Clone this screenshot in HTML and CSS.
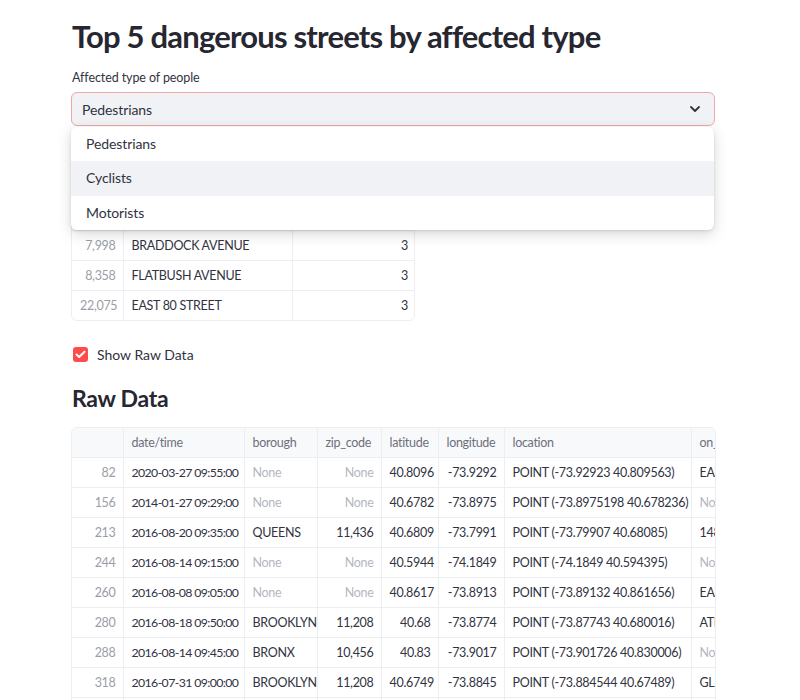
FILE: index.html
```html
<!DOCTYPE html>
<html lang="en">
<head>
<meta charset="utf-8">
<title>Top 5 dangerous streets</title>
<link rel="stylesheet" href="styles.css">
</head>
<body>
<main class="app">
  <h1 class="title">Top 5 dangerous streets by affected type</h1>

  <div class="select-block">
    <div class="select-label">Affected type of people</div>
    <div class="select-box">
      <span class="select-value">Pedestrians</span>
      <svg class="chevron" width="12" height="8" viewBox="0 0 12 8"><polyline points="2,2 6,6 10,2" fill="none" stroke="#31333f" stroke-width="1.8" stroke-linecap="round" stroke-linejoin="round"/></svg>
    </div>
    <ul class="menu">
      <li class="menu-item">Pedestrians</li>
      <li class="menu-item active">Cyclists</li>
      <li class="menu-item">Motorists</li>
    </ul>
  </div>

  <div class="frame small">
    <table class="grid">
      <colgroup><col class="c-idx"><col class="c-street"><col class="c-count"></colgroup>
      <thead><tr><th></th><th>on_street_name</th><th>injured</th></tr></thead>
      <tbody>
        <tr><td class="idx">1,242</td><td>BROADWAY</td><td class="num">4</td></tr>
        <tr><td class="idx">5,316</td><td>ATLANTIC AVENUE</td><td class="num">3</td></tr>
        <tr><td class="idx">7,998</td><td>BRADDOCK AVENUE</td><td class="num">3</td></tr>
        <tr><td class="idx">8,358</td><td>FLATBUSH AVENUE</td><td class="num">3</td></tr>
        <tr><td class="idx">22,075</td><td>EAST 80 STREET</td><td class="num">3</td></tr>
      </tbody>
    </table>
  </div>

  <label class="check">
    <span class="check-box"><svg width="11" height="9" viewBox="0 0 11 9"><polyline points="1.5,4.5 4.2,7 9.5,1.8" fill="none" stroke="#fff" stroke-width="2" stroke-linecap="round" stroke-linejoin="round"/></svg></span>
    <span class="check-text">Show Raw Data</span>
  </label>

  <h2 class="subtitle">Raw Data</h2>

  <div class="frame raw">
    <table class="grid">
      <colgroup>
        <col class="r-idx"><col class="r-date"><col class="r-bor"><col class="r-zip"><col class="r-lat"><col class="r-lon"><col class="r-loc"><col class="r-on">
      </colgroup>
      <thead><tr><th></th><th>date/time</th><th>borough</th><th>zip_code</th><th>latitude</th><th>longitude</th><th>location</th><th>on_street_name</th></tr></thead>
      <tbody>
        <tr><td class="idx">82</td><td class="date">2020-03-27 09:55:00</td><td class="none">None</td><td class="num none">None</td><td class="num">40.8096</td><td class="num">-73.9292</td><td>POINT (-73.92923 40.809563)</td><td>EAST 138 STREET</td></tr>
        <tr><td class="idx">156</td><td class="date">2014-01-27 09:29:00</td><td class="none">None</td><td class="num none">None</td><td class="num">40.6782</td><td class="num">-73.8975</td><td>POINT (-73.8975198 40.678236)</td><td class="none">None</td></tr>
        <tr><td class="idx">213</td><td class="date">2016-08-20 09:35:00</td><td>QUEENS</td><td class="num">11,436</td><td class="num">40.6809</td><td class="num">-73.7991</td><td>POINT (-73.79907 40.68085)</td><td>148 STREET</td></tr>
        <tr><td class="idx">244</td><td class="date">2016-08-14 09:15:00</td><td class="none">None</td><td class="num none">None</td><td class="num">40.5944</td><td class="num">-74.1849</td><td>POINT (-74.1849 40.594395)</td><td class="none">None</td></tr>
        <tr><td class="idx">260</td><td class="date">2016-08-08 09:05:00</td><td class="none">None</td><td class="num none">None</td><td class="num">40.8617</td><td class="num">-73.8913</td><td>POINT (-73.89132 40.861656)</td><td>EAST FORDHAM ROAD</td></tr>
        <tr><td class="idx">280</td><td class="date">2016-08-18 09:50:00</td><td>BROOKLYN</td><td class="num">11,208</td><td class="num">40.68</td><td class="num">-73.8774</td><td>POINT (-73.87743 40.680016)</td><td>ATLANTIC AVENUE</td></tr>
        <tr><td class="idx">288</td><td class="date">2016-08-14 09:45:00</td><td>BRONX</td><td class="num">10,456</td><td class="num">40.83</td><td class="num">-73.9017</td><td>POINT (-73.901726 40.830006)</td><td class="none">None</td></tr>
        <tr><td class="idx">318</td><td class="date">2016-07-31 09:00:00</td><td>BROOKLYN</td><td class="num">11,208</td><td class="num">40.6749</td><td class="num">-73.8845</td><td>POINT (-73.884544 40.67489)</td><td>GLENMORE AVENUE</td></tr>
        <tr><td class="idx">331</td><td class="date">2016-07-30 09:10:00</td><td>QUEENS</td><td class="num">11,368</td><td class="num">40.7571</td><td class="num">-73.8612</td><td>POINT (-73.86121 40.75712)</td><td>34 AVENUE</td></tr>
      </tbody>
    </table>
  </div>
</main>
</body>
</html>
```
FILE: styles.css
```css
html, body {
  margin: 0;
  padding: 0;
  background: #ffffff;
  overflow: hidden;
}
body {
  font-family: "Lato", "Open Sans", sans-serif;
  color: #31333f;
}
.app {
  width: 644px;
  padding: 16px 0 0 71px;
}
.title {
  margin: 0 0 0 1px;
  font-size: 31px;
  font-weight: 700;
  line-height: 40px;
  color: #262730;
  letter-spacing: -0.8px;
}
.select-block {
  position: relative;
  margin-top: 14px;
}
.select-label {
  font-size: 12.5px;
  line-height: 16px;
  margin-left: 1px;
  margin-bottom: 6px;
  letter-spacing: -0.1px;
}
.select-box {
  height: 32px;
  border: 1px solid #f0a7a7;
  border-radius: 6px;
  background: #f0f2f6;
  display: flex;
  align-items: center;
  justify-content: space-between;
  padding: 0 13px 0 10px;
  font-size: 14px;
  letter-spacing: -0.1px;
}
.chevron {
  display: block;
}
.menu {
  position: absolute;
  left: 0;
  right: 1px;
  top: calc(100% + 1px);
  margin: 0;
  padding: 0;
  list-style: none;
  background: #ffffff;
  border-radius: 6px;
  box-shadow: 0 4px 14px rgba(0, 0, 0, 0.16), 0 1px 3px rgba(0, 0, 0, 0.1);
  z-index: 10;
  overflow: hidden;
}
.menu-item {
  height: 34.3px;
  line-height: 34.3px;
  padding-left: 15px;
  font-size: 14px;
  letter-spacing: -0.1px;
}
.menu-item.active {
  background: #f0f2f6;
}
.frame {
  border: 1px solid #eceef2;
  border-radius: 6px;
  overflow: hidden;
}
.frame.small {
  margin-top: 14px;
  width: 342px;
}
.frame.raw {
  width: 643px;
  margin-top: 14px;
}
.grid {
  border-collapse: collapse;
  table-layout: fixed;
  font-size: 12.5px;
  letter-spacing: -0.3px;
}
.frame.small .grid { width: 343px; }
.frame.raw .grid { width: 760px; }
.c-idx { width: 51px; }
.c-street { width: 169px; }
.c-count { width: 123px; }
.r-idx { width: 51px; }
.r-date { width: 121px; }
.r-bor { width: 73px; }
.r-zip { width: 64px; }
.r-lat { width: 57px; }
.r-lon { width: 66px; }
.r-loc { width: 187px; }
.r-on { width: 141px; }
.grid th,
.grid td {
  height: 29px;
  padding: 0 2px 0 8px;
  border-right: 1px solid #eceef2;
  border-bottom: 1px solid #eceef2;
  white-space: nowrap;
  overflow: hidden;
  text-align: left;
}
.grid th {
  background: #f8f9fb;
  font-weight: 400;
  color: #6c707c;
}
.grid tr:last-child td { border-bottom: none; }
.frame.small .grid th:last-child,
.frame.small .grid td:last-child { border-right: none; }
.grid td.idx {
  text-align: right;
  color: #9a9ea8;
  padding-right: 7px;
}
.grid td.date {
  font-size: 12.3px;
  letter-spacing: -0.6px;
}
.grid td.num {
  text-align: right;
  padding-right: 7px;
}
.grid td.none { color: #b4b7bf; }
.check {
  display: flex;
  align-items: center;
  gap: 9px;
  margin-top: 25px;
  margin-left: 2px;
  font-size: 14px;
}
.check-box {
  width: 15px;
  height: 15px;
  border-radius: 3px;
  background: #ff4b4b;
  display: flex;
  align-items: center;
  justify-content: center;
}
.subtitle {
  margin: 20px 0 0 1px;
  font-size: 23px;
  font-weight: 700;
  line-height: 30px;
  color: #262730;
  letter-spacing: -0.3px;
}
```
